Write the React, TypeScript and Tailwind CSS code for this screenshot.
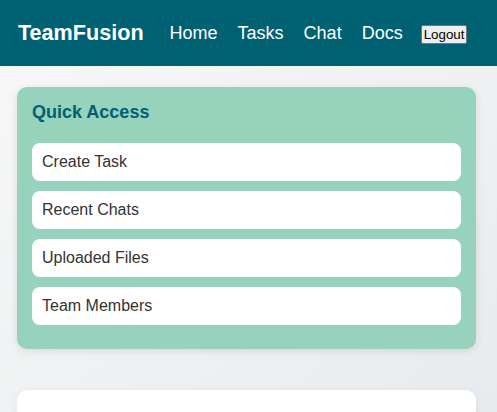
import React from "react";

export default function App() {
  const items = ["Create Task", "Recent Chats", "Uploaded Files", "Team Members"];
  return (
    <div
      className="h-[412px] bg-gradient-to-br from-[#f8f8f8] to-[#e8ebed] overflow-hidden"
      style={{ fontFamily: '"Liberation Sans", Arial, sans-serif' }}
    >
      <header className="h-[66px] bg-[#006173] flex items-center pl-[18px]">
        <div className="text-white font-bold text-[21.6px] leading-none">TeamFusion</div>
        <nav className="flex items-center ml-[26px] gap-[20px]">
          <a className="text-white text-[18px] leading-none">Home</a>
          <a className="text-white text-[18px] leading-none">Tasks</a>
          <a className="text-white text-[18px] leading-none">Chat</a>
          <a className="text-white text-[18px] leading-none">Docs</a>
          <button className="bg-[#efefef] text-black text-[13.33px] leading-[15px] px-[2px] py-[1px] border border-[#767676] rounded-[2px] mt-[3px] -ml-[2px]">
            Logout
          </button>
        </nav>
      </header>
      <main className="pt-[21px] pl-[17px] pr-[21px]">
        <section className="bg-[#96d2bc] rounded-[10px] shadow-[0_2px_8px_rgba(0,0,0,0.1)] px-[15px] pt-[15px] pb-[24px]">
          <h3 className="text-[#006173] font-bold text-[18px] leading-[21px] mb-[20px]">Quick Access</h3>
          <div className="flex flex-col gap-[10px]">
            {items.map((t) => (
              <div key={t} className="bg-white rounded-[8px] h-[38px] flex items-center px-[10px] text-[#333] text-[16px]">
                {t}
              </div>
            ))}
          </div>
        </section>
        <section className="bg-white rounded-[10px] shadow-[0_2px_8px_rgba(0,0,0,0.06)] mt-[41px] h-[80px]" />
      </main>
    </div>
  );
}
